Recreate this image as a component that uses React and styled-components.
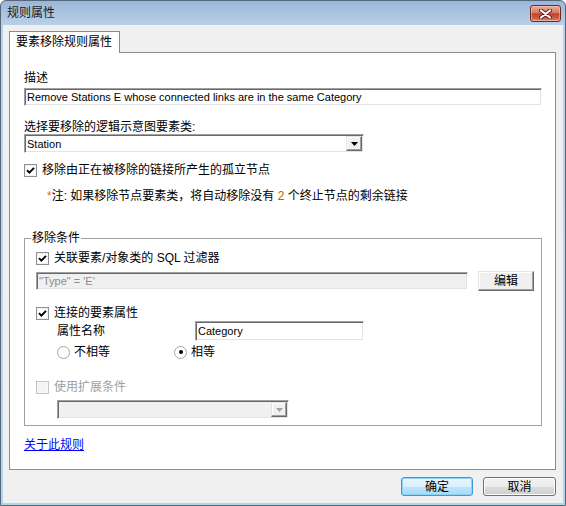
import React from "react"
import styled, { createGlobalStyle } from "styled-components"

const GlobalStyle = createGlobalStyle`
  html, body {
    margin: 0;
    padding: 0;
    background: #ffffff;
  }
  body {
    font-family: "Liberation Sans", "Noto Sans CJK SC", sans-serif;
    font-size: 12px;
    color: #000000;
  }
  * {
    box-sizing: border-box;
  }
`

// ** window chrome
const Window = styled.div`
  width: 566px;
  height: 506px;
  display: flex;
  flex-direction: column;
  border: 1px solid #55657a;
  border-radius: 6px 6px 0 0;
  padding: 0 2px 2px;
  background: linear-gradient(180deg, #9ab6d8 0px, #bad1ea 25px, #bfd6ed 70%, #a9d8ef 100%);
`

const TitleBar = styled.div`
  height: 24px;
  display: flex;
  align-items: center;
  padding-left: 4px;
`

const Title = styled.div`
  flex: 1;
  line-height: 14px;
  color: #1a1a1a;
`

const CloseButton = styled.div`
  align-self: flex-start;
  margin: 4px 2px 0 0;
  width: 31px;
  height: 17px;
  border: 1px solid #6a2b22;
  border-radius: 3px;
  display: flex;
  align-items: center;
  justify-content: center;
  background: linear-gradient(180deg, #e9ab99 0%, #d57a65 45%, #c2432b 52%, #cf5a40 80%, #e08d73 100%);
  box-shadow: inset 0 0 0 1px rgba(255, 220, 210, 0.45);
`

const Body = styled.div`
  flex: 1;
  display: flex;
  flex-direction: column;
  background: #f0f0f0;
  padding: 6px 7px 0 6px;
`

// ** tab control
const TabStrip = styled.div`
  display: flex;
`

const Tab = styled.div`
  position: relative;
  z-index: 1;
  height: 22px;
  margin-bottom: -1px;
  padding: 0 7px 0 6px;
  border: 1px solid #898c95;
  border-bottom: none;
  background: #ffffff;
  line-height: 20px;
`

const Panel = styled.div`
  flex: 1;
  display: flex;
  flex-direction: column;
  border: 1px solid #898c95;
  background: #ffffff;
  padding: 0 13px 0 14px;
`

// ** form parts
const Caption = styled.div`
  line-height: 14px;
  margin-top: ${(p) => p.$mt || 0}px;
`

const TextBox = styled.div`
  height: ${(p) => p.$h || 18}px;
  width: ${(p) => (p.$w ? `${p.$w}px` : "auto")};
  flex: ${(p) => (p.$grow ? 1 : "none")};
  margin-top: ${(p) => p.$mt || 0}px;
  display: flex;
  align-items: center;
  padding-left: 2px;
  border: 1px solid;
  border-color: #a0a0a0 #ffffff #ffffff #a0a0a0;
  box-shadow: inset 1px 1px 0 #696969, inset -1px -1px 0 #e3e3e3;
  background: ${(p) => (p.$disabled ? "#f0f0f0" : "#ffffff")};
  color: ${(p) => (p.$disabled ? "#8d8d8d" : "#000000")};
  font-family: "Liberation Sans", "DejaVu Sans", sans-serif;
  font-size: 11px;
  white-space: nowrap;
  overflow: hidden;
`

const Combo = styled(TextBox)`
  padding-right: 1px;
  justify-content: space-between;
  align-items: stretch;
  margin-left: ${(p) => p.$ml || 0}px;
`

const ComboText = styled.span`
  display: flex;
  align-items: center;
`

const DropButton = styled.span`
  width: 16px;
  margin: 1px 0;
  display: flex;
  align-items: center;
  justify-content: center;
  background: #f0f0f0;
  border: 1px solid;
  border-color: #e3e3e3 #696969 #696969 #e3e3e3;
  box-shadow: inset -1px -1px 0 #a0a0a0, inset 1px 1px 0 #ffffff;
`

const EditButton = styled.div`
  width: 56px;
  height: 20px;
  display: flex;
  align-items: center;
  justify-content: center;
  background: #f0f0f0;
  border: 1px solid;
  border-color: #e3e3e3 #696969 #696969 #e3e3e3;
  box-shadow: inset -1px -1px 0 #a0a0a0, inset 1px 1px 0 #ffffff;
  line-height: 14px;
`

const CheckRow = styled.div`
  display: flex;
  align-items: center;
  gap: 5px;
  line-height: 14px;
  margin-top: ${(p) => p.$mt || 0}px;
  color: ${(p) => (p.$disabled ? "#a0a0a0" : "#000000")};
`

const Box = styled.span`
  width: 13px;
  height: 13px;
  flex: none;
  display: flex;
  align-items: center;
  justify-content: center;
  border: 1px solid ${(p) => (p.$disabled ? "#c4c4c4" : "#8e8f8f")};
  background: ${(p) => (p.$disabled ? "#f4f4f4" : "#ffffff")};
  box-shadow: inset 0 0 0 1px ${(p) => (p.$disabled ? "#f8f8f8" : "#f1f1f1")};
`

const Note = styled.div`
  margin-top: 12px;
  padding-left: 23px;
  line-height: 14px;
`

const Accent = styled.span`
  color: ${(p) => p.$color};
`

const Group = styled.fieldset`
  margin: 28px 0 0;
  min-width: 0;
  padding: 6px 7px 6px 11px;
  border: 1px solid #a0a0a0;
`

const GroupTitle = styled.legend`
  margin-left: -5px;
  padding: 0 1px;
  line-height: 14px;
`

const FilterRow = styled.div`
  display: flex;
  align-items: center;
  gap: 10px;
  height: 20px;
  margin-top: 6px;
`

const AttrRow = styled.div`
  display: flex;
  align-items: center;
  margin-top: 1px;
  padding-left: 21px;
`

const AttrLabel = styled.span`
  width: 138px;
  line-height: 14px;
`

const RadioRow = styled.div`
  display: flex;
  margin-top: 4px;
  padding-left: 21px;
  line-height: 14px;
`

const RadioItem = styled.div`
  width: ${(p) => (p.$w ? `${p.$w}px` : "auto")};
  display: flex;
  align-items: center;
  gap: 4px;
`

const Dot = styled.span`
  width: 13px;
  height: 13px;
  border-radius: 50%;
  border: 1px solid #a4a4a4;
  background: #ffffff;
  display: flex;
  align-items: center;
  justify-content: center;
  &::after {
    content: "";
    width: 4px;
    height: 4px;
    border-radius: 50%;
    background: ${(p) => (p.$on ? "#000000" : "transparent")};
  }
`

const HelpLink = styled.a`
  align-self: flex-start;
  margin-top: 12px;
  line-height: 14px;
  color: #0000ff;
  text-decoration: underline;
  cursor: pointer;
`

// ** dialog buttons
const Footer = styled.div`
  display: flex;
  justify-content: flex-end;
  gap: 10px;
  padding: 7px 0;
`

const DialogButton = styled.div`
  width: ${(p) => p.$w}px;
  height: 19px;
  display: flex;
  align-items: center;
  justify-content: center;
  line-height: 14px;
  border-radius: 3px;
  border: 1px solid ${(p) => (p.$primary ? "#3c9ad8" : "#707070")};
  background: ${(p) =>
    p.$primary
      ? "linear-gradient(180deg, #eaf6fd 0%, #d9f0fc 50%, #bee6fd 50%, #a7d9f5 100%)"
      : "linear-gradient(180deg, #f2f2f2 0%, #ebebeb 50%, #dddddd 50%, #cfcfcf 100%)"};
  box-shadow: inset 0 0 0 1px ${(p) => (p.$primary ? "#8fd3f4" : "#fcfcfc")};
`

const Tick = () => (
  <svg width="9" height="9" viewBox="0 0 9 9">
    <path d="M1 4.2 L3.4 6.6 L8 1.8" fill="none" stroke="#000" strokeWidth="1.9" />
  </svg>
)

const Arrow = ({ color = "#000" }) => (
  <svg width="7" height="4" viewBox="0 0 7 4">
    <polygon points="0,0 7,0 3.5,4" fill={color} />
  </svg>
)

const CloseGlyph = () => (
  <svg width="13" height="10" viewBox="0 0 13 10">
    <path d="M2 1.5 L11 8.5 M11 1.5 L2 8.5" stroke="#5a2018" strokeWidth="4" strokeLinecap="round" />
    <path d="M2 1.5 L11 8.5 M11 1.5 L2 8.5" stroke="#ffffff" strokeWidth="2.2" strokeLinecap="round" />
  </svg>
)

const Check = ({ checked, disabled, children, mt }) => (
  <CheckRow $mt={mt} $disabled={disabled}>
    <Box $disabled={disabled}>{checked && <Tick />}</Box>
    <span>{children}</span>
  </CheckRow>
)

const App = () => {
  return (
    <>
      <GlobalStyle />
      <Window>
        <TitleBar>
          <Title>规则属性</Title>
          <CloseButton>
            <CloseGlyph />
          </CloseButton>
        </TitleBar>
        <Body>
          <TabStrip>
            <Tab>要素移除规则属性</Tab>
          </TabStrip>
          <Panel>
            <Caption $mt={18}>描述</Caption>
            <TextBox $mt={3}>Remove Stations E whose connected links are in the same Category</TextBox>

            <Caption $mt={14}>选择要移除的逻辑示意图要素类:</Caption>
            <Combo $w={340} $h={19}>
              <ComboText>Station</ComboText>
              <DropButton>
                <Arrow />
              </DropButton>
            </Combo>

            <Check checked mt={10}>
              移除由正在被移除的链接所产生的孤立节点
            </Check>
            <Note>
              <Accent $color="#e86a10">*</Accent>注: 如果移除节点要素类，将自动移除没有 <Accent $color="#c85a00">2</Accent> 个终止节点的剩余链接
            </Note>

            <Group>
              <GroupTitle>移除条件</GroupTitle>
              <Check checked>关联要素/对象类的 SQL 过滤器</Check>
              <FilterRow>
                <TextBox $grow $disabled>
                  "Type" = 'E'
                </TextBox>
                <EditButton>编辑</EditButton>
              </FilterRow>

              <Check checked mt={15}>
                连接的要素属性
              </Check>
              <AttrRow>
                <AttrLabel>属性名称</AttrLabel>
                <TextBox $w={169} $h={20}>
                  Category
                </TextBox>
              </AttrRow>
              <RadioRow>
                <RadioItem $w={117}>
                  <Dot />
                  <span>不相等</span>
                </RadioItem>
                <RadioItem>
                  <Dot $on />
                  <span>相等</span>
                </RadioItem>
              </RadioRow>

              <Check disabled mt={21}>
                使用扩展条件
              </Check>
              <Combo $w={232} $h={19} $mt={6} $ml={21} $disabled>
                <ComboText />
                <DropButton>
                  <Arrow color="#a0a0a0" />
                </DropButton>
              </Combo>
            </Group>

            <HelpLink>关于此规则</HelpLink>
          </Panel>
          <Footer>
            <DialogButton $w={72} $primary>
              确定
            </DialogButton>
            <DialogButton $w={73}>取消</DialogButton>
          </Footer>
        </Body>
      </Window>
    </>
  )
}

export default App
